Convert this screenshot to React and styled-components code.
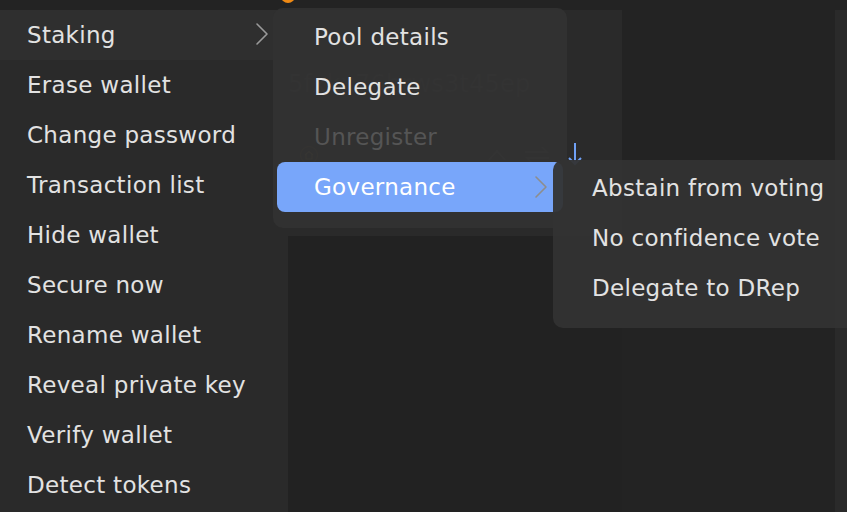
import styled, { createGlobalStyle } from "styled-components";

const GlobalStyle = createGlobalStyle`
    html, body {
        margin: 0;
        padding: 0;
        background: #232323;
    }
    #root {
        width: 847px;
        height: 512px;
        overflow: hidden;
    }
`

const walletActions = [
    "Staking",
    "Erase wallet",
    "Change password",
    "Transaction list",
    "Hide wallet",
    "Secure now",
    "Rename wallet",
    "Reveal private key",
    "Verify wallet",
    "Detect tokens",
]

const stakingActions = [
    { label: "Pool details" },
    { label: "Delegate" },
    { label: "Unregister", disabled: true },
    { label: "Governance", active: true, sub: true },
]

const governanceActions = ["Abstain from voting", "No confidence vote", "Delegate to DRep"]

const Chevron = ({ color }) => (
    <svg width="14" height="24" viewBox="0 0 14 24" fill="none">
        <path d="M2 2 L12 12 L2 22" stroke={color} strokeWidth="1.6" strokeLinecap="round" strokeLinejoin="round" />
    </svg>
)

const App = () => {
    return (
        <>
            <GlobalStyle />
            <Page>
                <TopStrip>
                    <PeekIcon />
                </TopStrip>
                <Body>
                    <SideMenu>
                        {walletActions.map((label, index) => (
                            <SideItem key={label} $hover={index === 0}>
                                {label}
                                {index === 0 && <Chevron color="#9a9a9a" />}
                            </SideItem>
                        ))}
                    </SideMenu>
                    <Content>
                        <WalletColumn>
                            <WalletCard>
                                <Address>5fxkx76hrws3t45ep</Address>
                                <ActionRow>
                                    <HomeBadge>
                                        <svg width="12" height="12" viewBox="0 0 12 12" fill="none">
                                            <path d="M2 6 L6 2.5 L10 6 M3 5.5 V10 H9 V5.5" stroke="#c9a24a" strokeWidth="1.2" />
                                        </svg>
                                    </HomeBadge>
                                    <Spacer />
                                    <FaintIcon width="22" height="14" viewBox="0 0 22 14" fill="none">
                                        <path d="M3 12 L11 3 L19 12" stroke="#7a7a7a" strokeWidth="1.6" />
                                    </FaintIcon>
                                    <FaintIcon width="30" height="20" viewBox="0 0 30 20" fill="none">
                                        <path d="M3 7 H25 L20 2 M27 13 H5 L10 18" stroke="#7a7a7a" strokeWidth="1.6" />
                                    </FaintIcon>
                                    <svg width="18" height="26" viewBox="0 0 18 26" fill="none">
                                        <path d="M9 1 V22 M3 16 L9 22 L15 16" stroke="#6fa0f5" strokeWidth="2" />
                                    </svg>
                                </ActionRow>
                            </WalletCard>
                        </WalletColumn>
                        <SideColumn />
                        <ScrollTrack />
                    </Content>
                </Body>

                <StakingMenu>
                    {stakingActions.map((item) => (
                        <PopItem key={item.label} $active={item.active} $disabled={item.disabled}>
                            {item.label}
                            {item.sub && <Chevron color="#8d8d8d" />}
                        </PopItem>
                    ))}
                </StakingMenu>

                <GovernanceMenu>
                    {governanceActions.map((label) => (
                        <SubItem key={label}>{label}</SubItem>
                    ))}
                </GovernanceMenu>
            </Page>
        </>
    )
}

export default App

//Styles

const Page = styled.div`
    position: relative;
    width: 847px;
    height: 512px;
    background: #232323;
    font-family: "DejaVu Sans", "Open Sans", sans-serif;
    overflow: hidden;
    display: flex;
    flex-direction: column;
`

const TopStrip = styled.div`
    height: 10px;
    flex-shrink: 0;
    position: relative;
    background: #232323;
`

const PeekIcon = styled.div`
    position: absolute;
    left: 281px;
    top: -10px;
    width: 14px;
    height: 13px;
    border-radius: 50%;
    background: #f08a14;
`

const Body = styled.div`
    flex: 1;
    display: grid;
    grid-template-columns: 288px 1fr;
    min-height: 0;
`

const SideMenu = styled.ul`
    margin: 0;
    padding: 0;
    list-style: none;
    background: #2a2a2a;
    display: flex;
    flex-direction: column;
`

const SideItem = styled.li`
    height: 50px;
    flex-shrink: 0;
    display: flex;
    align-items: center;
    justify-content: space-between;
    padding: 0 19px 0 27px;
    font-size: 23px;
    letter-spacing: 0.3px;
    color: #e2e2e2;
    background: ${(p) => (p.$hover ? "#2f2f2f" : "transparent")};
    svg {
        margin-top: -3px;
    }
`

const Content = styled.div`
    display: grid;
    grid-template-columns: 334px 1fr 12px;
`

const WalletColumn = styled.div`
    background: #222222;
`

const WalletCard = styled.div`
    height: 226px;
    background: #2a2a2a;
    display: flex;
    flex-direction: column;
    padding: 60px 0 0 0;
    box-sizing: border-box;
`

const Address = styled.div`
    font-size: 24px;
    color: #4a4a4a;
    white-space: nowrap;
    letter-spacing: 0.2px;
`

const ActionRow = styled.div`
    display: flex;
    align-items: center;
    gap: 14px;
    padding: 44px 38px 0 12px;
`

const FaintIcon = styled.svg`
    opacity: 0.6;
`

const HomeBadge = styled.div`
    width: 16px;
    height: 16px;
    border: 1.5px solid #a3852f;
    border-radius: 50%;
    display: flex;
    align-items: center;
    justify-content: center;
    opacity: 0.6;
`

const Spacer = styled.div`
    flex: 1;
`

const SideColumn = styled.div`
    background: #232323;
`

const ScrollTrack = styled.div`
    background: #2a2a2a;
`

const StakingMenu = styled.ul`
    position: absolute;
    left: 273px;
    top: 8px;
    width: 294px;
    height: 220px;
    margin: 0;
    padding: 4px 4px 16px 4px;
    box-sizing: border-box;
    list-style: none;
    border-radius: 10px;
    background: rgba(49, 49, 49, 0.95);
`

const PopItem = styled.li`
    height: 50px;
    display: flex;
    align-items: center;
    justify-content: space-between;
    padding: 0 15px 0 37px;
    border-radius: 8px;
    font-size: 23px;
    letter-spacing: 0.3px;
    color: ${(p) => (p.$disabled ? "#555555" : p.$active ? "#ffffff" : "#e2e2e2")};
    background: ${(p) => (p.$active ? "#78a6fa" : "transparent")};
`

const GovernanceMenu = styled.ul`
    position: absolute;
    left: 553px;
    top: 160px;
    width: 310px;
    height: 168px;
    margin: 0;
    padding: 3px 0 15px 39px;
    box-sizing: border-box;
    list-style: none;
    border-radius: 10px;
    background: rgba(51, 51, 51, 0.95);
`

const SubItem = styled.li`
    height: 50px;
    display: flex;
    align-items: center;
    font-size: 23px;
    letter-spacing: 0.3px;
    color: #e2e2e2;
    white-space: nowrap;
`
